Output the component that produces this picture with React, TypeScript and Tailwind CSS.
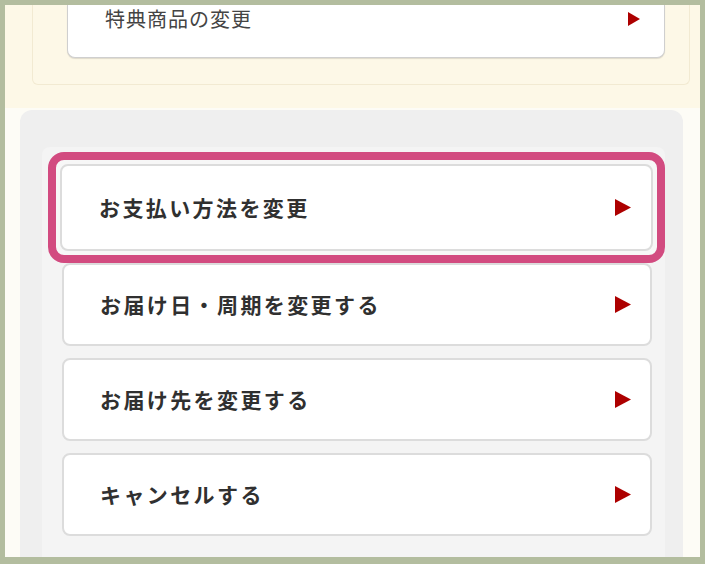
import React from 'react';

const items = ['お届け日・周期を変更する', 'お届け先を変更する', 'キャンセルする'];

function Arrow({ small }: { small?: boolean }) {
  return small ? (
    <svg width="12" height="14" viewBox="0 0 12 14" className="shrink-0">
      <path d="M0 0 L12 7 L0 14 Z" fill="#ad0000" />
    </svg>
  ) : (
    <svg width="16" height="17" viewBox="0 0 16 17" className="shrink-0">
      <path d="M0 0 L16 8.5 L0 17 Z" fill="#ad0000" />
    </svg>
  );
}

export default function App() {
  return (
    <div
      className="w-[705px] h-[564px] overflow-hidden bg-[#b3bd9f] pt-[5px] pl-[5px] pr-[5px] pb-[7px]"
      style={{ fontFamily: '"Noto Sans CJK JP", "Noto Sans", sans-serif' }}
    >
      <div className="h-full bg-[#fdfcf6] flex flex-col overflow-hidden">
        {/* 特典 section */}
        <div className="h-[103px] shrink-0 bg-[#fdf8e7] pl-[27px] pr-[10px]">
          <div className="h-[80px] border border-t-0 border-[#f2ead2] rounded-b-md flex flex-col justify-end pl-[34px] pr-[24px]">
            <div className="h-[60px] mb-[26px] bg-white border border-[#cfcfcf] border-t-0 rounded-b-lg shadow-[0_1px_1px_rgba(0,0,0,0.12)] flex items-start justify-between pl-[37px] pr-[24px]">
              <span className="text-[20px] leading-[28px] tracking-[1px] text-[#444]">特典商品の変更</span>
              <span className="mt-[7px]">
                <Arrow small />
              </span>
            </div>
          </div>
        </div>

        {/* menu panel */}
        <div className="flex-1 pt-[2px] pl-[15px] pr-[17px]">
          <div className="h-full bg-[#efefef] rounded-t-xl pt-[37px] pl-[22px] pr-[18px]">
            <div className="h-full bg-[#f4f4f4] rounded-t-lg pt-[5px] pl-[6px] flex flex-col">
              <div className="border-[8px] border-[#d24b80] rounded-[16px] p-[4px] bg-[#f7f7f7]">
                <div className="h-[87px] bg-white border-2 border-[#dcdcdc] rounded-lg flex items-center justify-between pl-[37px] pr-[20px]">
                  <span className="text-[21px] font-bold tracking-[2.4px] text-[#303030]">お支払い方法を変更</span>
                  <Arrow />
                </div>
              </div>
              <div className="flex flex-col gap-3 pl-[14px] pr-[13px]">
                {items.map((t) => (
                  <div
                    key={t}
                    className="h-[83px] bg-white border-2 border-[#dcdcdc] rounded-lg flex items-center justify-between pl-[36px] pr-[19px]"
                  >
                    <span className="text-[21px] font-bold tracking-[2.4px] text-[#303030]">{t}</span>
                    <Arrow />
                  </div>
                ))}
              </div>
            </div>
          </div>
        </div>
      </div>
    </div>
  );
}
